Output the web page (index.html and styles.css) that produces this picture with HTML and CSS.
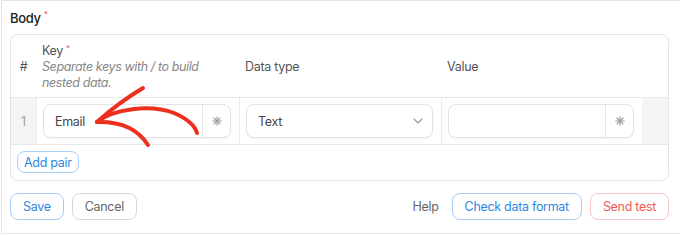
FILE: index.html
```html
<!DOCTYPE html>
<html>
<head>
<meta charset="utf-8">
<link rel="stylesheet" href="styles.css">
</head>
<body>
<div class="panel">
  <div class="label">Body<span class="req">*</span></div>
  <div class="card">
    <div class="grid head">
      <div class="cell c-num">#</div>
      <div class="cell c-key">
        <div>Key<span class="req">*</span></div>
        <div class="hint">Separate keys with / to build nested data.</div>
      </div>
      <div class="cell">Data type</div>
      <div class="cell">Value</div>
      <div class="cell"></div>
    </div>
    <div class="grid row">
      <div class="cell c-num gray">1</div>
      <div class="cell bl">
        <div class="input">
          <span class="val">Email</span>
          <span class="star"><svg width="10" height="10" viewBox="0 0 10 10"><g stroke="#9a9a9a" stroke-width="1.1" stroke-linecap="round"><line x1="5" y1="0.8" x2="5" y2="9.2"/><line x1="0.8" y1="5" x2="9.2" y2="5"/><line x1="2" y1="2" x2="8" y2="8"/><line x1="8" y1="2" x2="2" y2="8"/></g></svg></span>
        </div>
      </div>
      <div class="cell bl">
        <div class="input select">
          <span class="val">Text</span>
          <svg class="chev" width="10" height="6" viewBox="0 0 10 6"><path d="M1 1 L5 5 L9 1" fill="none" stroke="#9a9a9a" stroke-width="1.1" stroke-linecap="round" stroke-linejoin="round"/></svg>
        </div>
      </div>
      <div class="cell bl">
        <div class="input">
          <span class="val"></span>
          <span class="star"><svg width="10" height="10" viewBox="0 0 10 10"><g stroke="#9a9a9a" stroke-width="1.1" stroke-linecap="round"><line x1="5" y1="0.8" x2="5" y2="9.2"/><line x1="0.8" y1="5" x2="9.2" y2="5"/><line x1="2" y1="2" x2="8" y2="8"/><line x1="8" y1="2" x2="2" y2="8"/></g></svg></span>
        </div>
      </div>
      <div class="cell gray"></div>
    </div>
    <div class="add-row"><button class="btn btn-blue small">Add pair</button></div>
  </div>
  <div class="actions">
    <button class="btn btn-blue">Save</button>
    <button class="btn btn-gray">Cancel</button>
    <span class="spacer"></span>
    <span class="help">Help</span>
    <button class="btn btn-blue check">Check data format</button>
    <button class="btn btn-red">Send test</button>
  </div>
</div>
<svg class="arrow" width="680" height="235" viewBox="0 0 680 235">
  <g fill="none" stroke="#ec2f1f" stroke-width="4" stroke-linecap="round" stroke-linejoin="round">
    <path d="M97 122 C113 109 150 104 174 113 C188 119 195 126 197 133"/>
    <path d="M97 122 Q118 103 143 88"/>
    <path d="M97 122 Q133 121 148 145"/>
  </g>
</svg>
</body>
</html>
```
FILE: styles.css
```css
* { box-sizing: border-box; }
html, body { margin: 0; padding: 0; background: #fff; }
body {
  font-family: Inter, "Noto Sans", "Liberation Sans", sans-serif;
  font-size: 12.5px;
  letter-spacing: -0.3px;
  color: #444;
  position: relative;
  width: 680px;
  height: 235px;
  overflow: hidden;
}
.panel {
  margin-left: 1px;
  width: 679px;
  height: 234px;
  border: 1px solid #e6e6e6;
  border-right: 0;
  padding: 8px 0 0 8px;
}
.label {
  font-size: 13px;
  font-weight: 500;
  color: #222;
  height: 25px;
  line-height: 16px;
  padding-top: 1px;
}
.req {
  color: #f05050;
  font-size: 8px;
  vertical-align: top;
  margin-left: 3px;
  position: relative;
  top: -4px;
}
.card {
  width: 659px;
  height: 147px;
  border: 1px solid #e4e4e4;
  border-radius: 8px;
  overflow: hidden;
}
.grid {
  display: grid;
  grid-template-columns: 25px 203px 202px 201px 26px;
}
.head {
  height: 63px;
  border-bottom: 1px solid #e8e8e8;
  color: #555;
}
.head .cell {
  display: flex;
  align-items: center;
  padding-left: 6px;
}
.head .c-num { justify-content: center; padding-left: 0; }
.head .c-key {
  flex-direction: column;
  align-items: flex-start;
  justify-content: center;
  line-height: 16px;
  padding-top: 1px;
}
.c-key .req { top: -3px; }
.hint {
  font-style: italic;
  font-size: 12.5px;
  letter-spacing: -0.4px;
  color: #888;
  width: 190px;
}
.row {
  height: 47px;
  border-bottom: 1px solid #e8e8e8;
}
.row .cell {
  padding: 6px 8px 0 6px;
}
.row .bl { border-left: 1px solid #ececec; }
.row .c-num {
  display: flex;
  justify-content: center;
  align-items: center;
  padding: 0;
  color: #a0a0a0;
}
.gray { background: #f4f4f4; }
.row .cell.gray { padding: 0; }
.input {
  height: 34px;
  border: 1px solid #e2e2e2;
  border-radius: 8px;
  display: flex;
  align-items: stretch;
  box-shadow: 0 1px 2px rgba(0,0,0,0.05);
  background: #fff;
}
.input .val {
  flex: 1;
  display: flex;
  align-items: center;
  padding-left: 11px;
  color: #444;
}
.input .star {
  width: 28px;
  border-left: 1px solid #e6e6e6;
  display: flex;
  align-items: center;
  justify-content: center;
}
.select .chev { align-self: center; margin-right: 9px; }
.add-row {
  padding: 6px 0 0 6px;
}
.btn {
  font-family: inherit;
  font-size: 12.5px;
  letter-spacing: -0.3px;
  background: #fff;
  border-radius: 8px;
  height: 27px;
  padding: 0 12px;
  cursor: pointer;
}
.btn.small { height: 22px; padding: 0 6px; }
.btn-blue { color: #2f86e0; border: 1px solid #a8cdf6; }
.btn-gray { color: #666; border: 1px solid #d8d8d8; }
.btn-red { color: #ef5a5a; border: 1px solid #fbc6c6; }
.actions {
  display: flex;
  align-items: center;
  gap: 8px;
  width: 659px;
  margin-top: 12px;
}
.spacer { flex: 1; }
.help { color: #666; margin-right: 5px; }
.arrow {
  position: absolute;
  left: 0;
  top: 0;
  pointer-events: none;
}
```
